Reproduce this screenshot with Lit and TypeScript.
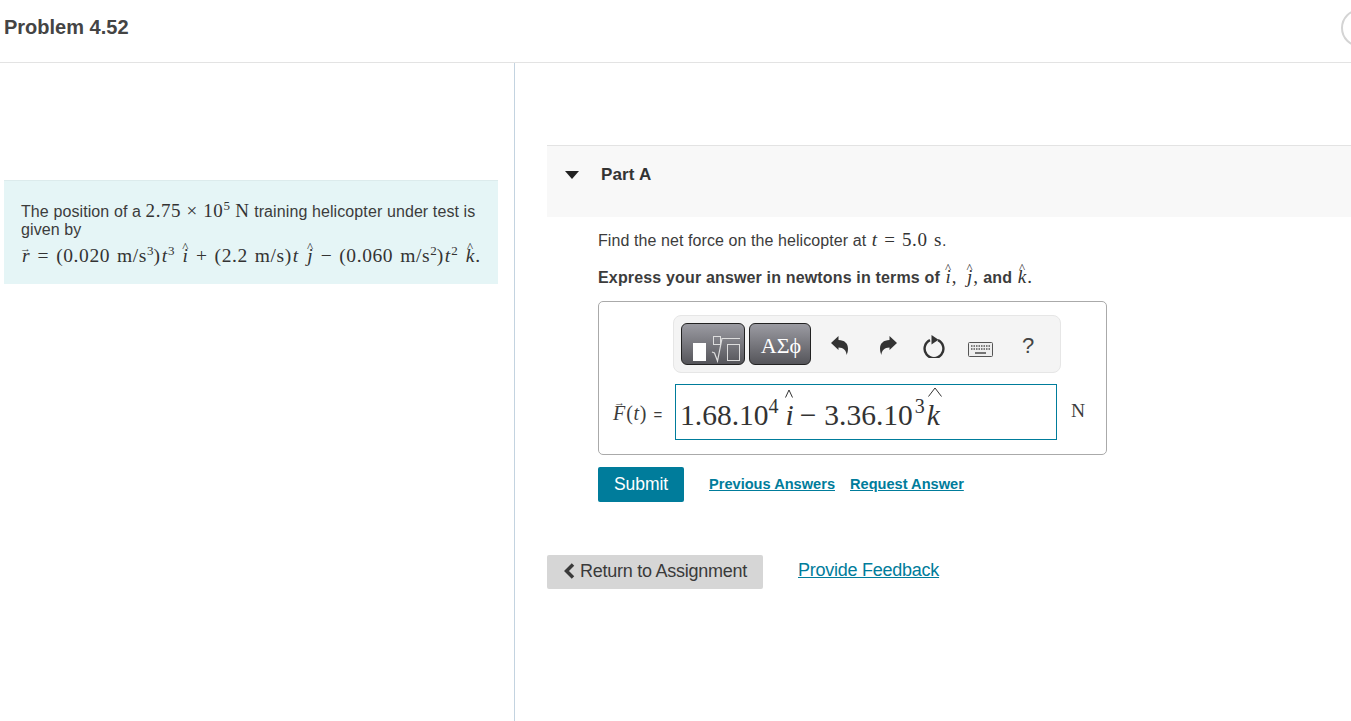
import { LitElement, html, css } from "lit";
import { customElement } from "lit/decorators.js";

@customElement("app-root")
export class AppRoot extends LitElement {
  static styles = css`
    :host { display: block; height: 721px; overflow: hidden; background: #fff; color: #3c3c3c; font-family: "Liberation Sans", Arial, sans-serif; font-size: 16px; }
    * { box-sizing: border-box; }
    .top { position: relative; height: 63px; border-bottom: 1px solid #e3e3e3; padding: 15px 0 0 4px; overflow: hidden; }
    .title { font-size: 20px; font-weight: 700; line-height: 24px; color: #444; }
    .circle { position: absolute; left: 1341px; top: 9px; width: 38px; height: 38px; border: 2px solid #d4d4d4; border-radius: 50%; }
    .main { display: grid; grid-template-columns: 515px 1fr; height: 658px; }
    .left { border-right: 1px solid #c3d3e0; padding: 117px 0 0 4px; }
    .intro { width: 494px; height: 104px; background: #e5f5f6; border-top: 1px solid #dcebec; padding: 21px 0 0 17px; line-height: 18px; letter-spacing: .1px; }
    .intro .l { display: block; white-space: nowrap; }
    .intro .eq { margin-top: 5px; line-height: 24px; }
    .m { font-family: "Liberation Serif", "Times New Roman", serif; font-size: 19px; letter-spacing: .6px; color: #333; font-weight: 400; }
    .eq.m { font-size: 19.5px; letter-spacing: .6px; word-spacing: 1.5px; }
    .m sup { font-size: 13px; line-height: 0; vertical-align: 7px; letter-spacing: 0; }
    .m i { letter-spacing: 0; margin: 0 1px; }
    .hat { position: relative; display: inline-block; font-style: italic; letter-spacing: 0; margin: 0 1px; }
    .hat::before { content: "^"; position: absolute; left: -2px; right: -2px; top: calc(50% - 15px); text-align: center; font-style: normal; font-size: 13px; line-height: 12px; }
    .arr::before { content: "→"; left: -2px; right: auto; top: calc(50% - 14.5px); font-size: 11px; }
    .q .m { word-spacing: 1px; font-size: 19px; }
    .q2 .m { word-spacing: 3.5px; }
    .part { height: 72px; background: #f8f8f8; border-top: 1px solid #e3e3e3; display: flex; align-items: flex-start; padding: 19px 0 0 18px; gap: 22px; }
    .right { padding: 82px 0 0 32px; }
    .tri { width: 0; height: 0; margin-top: 6px; border-left: 7px solid transparent; border-right: 7px solid transparent; border-top: 8px solid #222; }
    .part b { font-size: 17px; letter-spacing: .15px; line-height: 20px; color: #333; }
    .body { padding: 13px 0 0 51px; }
    .q { height: 20px; line-height: 20px; white-space: nowrap; letter-spacing: .08px; }
    .q2 { margin-top: 17px; font-weight: 700; height: 20px; line-height: 20px; white-space: nowrap; letter-spacing: .16px; }
    .box { margin-top: 14px; width: 509px; height: 154px; border: 1px solid #aaa; border-radius: 5px; padding: 13px 0 0 13px; }
    .tools { margin-left: 61px; width: 388px; height: 58px; background: #f4f4f4; border: 1px solid #e6e6e6; border-radius: 8px; padding: 7px 0 0 7px; display: flex; align-items: flex-start; }
    .btn { height: 42px; border: 1px solid #222; border-radius: 6px; background: linear-gradient(#9b9ba2, #55555a); display: flex; align-items: center; justify-content: center; color: #fff; }
    .b1 { width: 64px; }
    .b2 { width: 62px; margin-left: 4px; font-family: "Liberation Serif", serif; font-size: 22px; padding: 3px 0 0 2px; }
    .icon { flex: none; display: block; }
    .i1 { margin: 13px 0 0 20px; }
    .i2 { margin: 13px 0 0 32px; }
    .i3 { margin: 12px 0 0 26px; }
    .i4 { margin: 19px 0 0 23px; }
    .qm { margin: 10px 0 0 29px; font-size: 22px; line-height: 26px; color: #444; }
    .ans { display: flex; align-items: flex-start; margin-top: 11px; }
    .lab { width: 63px; padding-top: 17px; font-family: "Liberation Serif", serif; font-size: 20px; letter-spacing: .6px; line-height: 24px; white-space: nowrap; }
    .lab .eq2 { font-family: "Liberation Sans", sans-serif; font-size: 15px; margin-left: 1px; }
    .lab .arr::before { left: 1px; top: calc(50% - 17px); }
    .field { width: 382px; height: 56px; border: 1px solid #007c9b; padding: 8px 0 0 4px; font-family: "Liberation Serif", serif; font-size: 29.5px; line-height: 44px; white-space: nowrap; color: #333; }
    .field sup { font-size: 20px; line-height: 0; vertical-align: 12px; }
    .field i { position: relative; display: inline-block; }
    .fhat { position: absolute; display: block; }
    .ii { margin-left: 7px; }
    .ik { margin-left: 2px; }
    .sup2 { margin-left: 2px; }
    .minus { margin: 0 8px 0 6px; }
    .unit { margin: 15px 0 0 14px; font-family: "Liberation Serif", serif; font-size: 19.5px; line-height: 24px; }
    .acts { display: flex; align-items: center; margin-top: 12px; }
    .submit { width: 86px; height: 35px; padding-bottom: 1px; background: #007c9b; color: #fff; border-radius: 2px; display: flex; align-items: center; justify-content: center; font-size: 17.5px; letter-spacing: -.05px; }
    a { color: #007c9b; text-decoration: underline; }
    .lnk { font-size: 14.6px; font-weight: 700; margin: -2px 0 0 25px; }
    .lnk + .lnk { margin-left: 15px; }
    .foot { display: flex; align-items: center; margin-top: 53px; }
    .ret { width: 216px; height: 34px; padding: 0 0 2px 17px; background: #d6d6d6; border-radius: 2px; display: flex; align-items: center; gap: 5px; font-size: 18px; letter-spacing: -.25px; white-space: nowrap; color: #3a3a3a; }
    .fb { font-size: 18px; margin: -4px 0 0 35px; letter-spacing: -.25px; }
  `;

  render() {
    return html`
      <div class="top"><div class="title">Problem 4.52</div><div class="circle"></div></div>
      <div class="main">
        <div class="left">
          <div class="intro">
            <span class="l">The position of a <span class="m">2.75 × 10<sup>5</sup> N</span> training helicopter under test is</span>
            <span class="l">given by</span>
            <span class="l eq m"><span class="hat arr">r</span> = (0.020 m/s<sup>3</sup>)<i>t</i><sup>3</sup> <span class="hat">i</span> + (2.2 m/s)<i>t</i> <span class="hat">j</span> − (0.060 m/s<sup>2</sup>)<i>t</i><sup>2</sup> <span class="hat">k</span>.</span>
          </div>
        </div>
        <div class="right">
          <div class="part"><span class="tri"></span><b>Part A</b></div>
          <div class="body">
            <div class="q">Find the net force on the helicopter at <span class="m"><i>t</i> = 5.0 s</span>.</div>
            <div class="q2">Express your answer in newtons in terms of <span class="m"><span class="hat">i</span>, <span class="hat">j</span>,</span> and <span class="m"><span class="hat">k</span>.</span></div>
            <div class="box">
              <div class="tools">
                <div class="btn b1">
                  <svg width="62" height="40" viewBox="0 0 62 40" fill="none">
                    <rect x="11" y="19" width="13" height="18" fill="#fff"/>
                    <rect x="31.500" y="12.500" width="7" height="8" stroke="#ddd"/>
                    <path d="M30 28l2.500 1 3 8L40 14.500h18" stroke="#ddd" stroke-width="1.200"/>
                    <rect x="45.500" y="20.500" width="12" height="16" stroke="#ddd"/>
                  </svg>
                </div>
                <div class="btn b2">ΑΣϕ</div>
                <svg class="icon i1" width="17" height="19" viewBox="0 0 17 19"><path d="M0 7L7.500 0v4c6 0 9.500 3.500 9.500 8.500 0 2.500-.5 4.500-1.500 6.500.2-4-3-7.500-8-7.500V14z" fill="#333"/></svg>
                <svg class="icon i2" width="17" height="19" viewBox="0 0 17 19"><path d="M17 7L9.500 0v4C3.500 4 0 7.500 0 12.500 0 15 .5 17 1.500 19c-.2-4 3-7.500 8-7.500V14z" fill="#333"/></svg>
                <svg class="icon i3" width="22" height="23" viewBox="0 0 22 23" fill="none"><path d="M7 5.200a9.400 9.400 0 1 0 8 0" stroke="#333" stroke-width="2.400"/><path d="M8.500 0l7 4.700-7 4.700z" fill="#333"/></svg>
                <svg class="icon i4" width="25" height="15" viewBox="0 0 25 15"><rect x=".5" y=".5" width="24" height="14" rx="1" fill="#eee" stroke="#555"/><path d="M3 4h19M3 7h19" stroke="#555" stroke-width="1.600" stroke-dasharray="1.500 1"/><path d="M7 11h11" stroke="#555" stroke-width="1.600"/></svg>
                <span class="qm">?</span>
              </div>
              <div class="ans">
                <div class="lab"><span class="hat arr">F</span>(<i>t</i>) <span class="eq2">=</span></div>
                <div class="field">1.68.10<sup>4</sup><i class="ii">i<svg class="fhat" style="left:-1px;top:-4px" width="8" height="9" viewBox="0 0 8 9" fill="none"><path d="M.5 8.500L4 1l3.500 7.500" stroke="#333"/></svg></i><span class="minus">−</span>3.36.10<sup class="sup2">3</sup><i class="ik">k<svg class="fhat" style="left:1px;top:-6px" width="14" height="10" viewBox="0 0 14 10" fill="none"><path d="M.5 9.500L7 1l6.500 8.500" stroke="#333"/></svg></i></div>
                <div class="unit">N</div>
              </div>
            </div>
            <div class="acts">
              <div class="submit">Submit</div>
              <a class="lnk">Previous Answers</a>
              <a class="lnk">Request Answer</a>
            </div>
          </div>
          <div class="foot">
            <div class="ret">
              <svg width="11" height="16" viewBox="0 0 11 16"><path d="M9 1.500L2.500 8 9 14.500" fill="none" stroke="#3a3a3a" stroke-width="3.500"/></svg>
              Return to Assignment
            </div>
            <a class="fb">Provide Feedback</a>
          </div>
        </div>
      </div>
    `;
  }
}
